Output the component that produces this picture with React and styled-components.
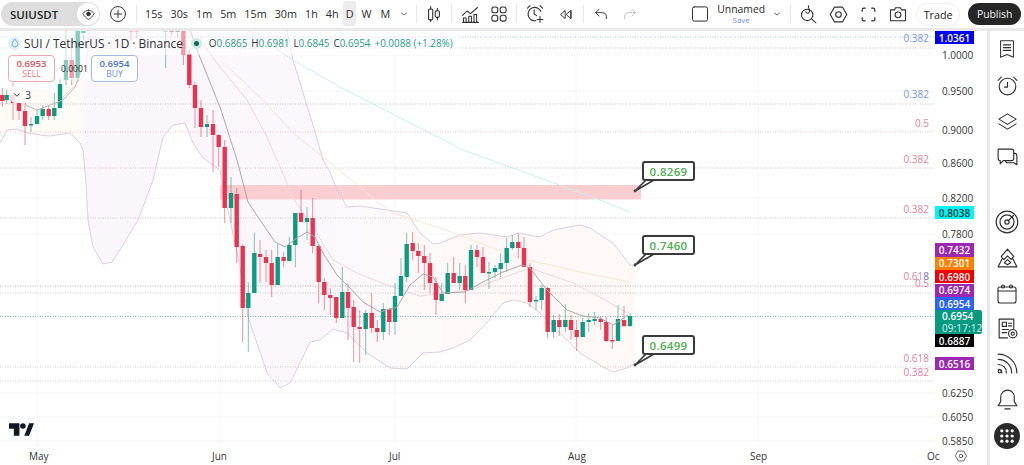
import React from "react";
import styled, { createGlobalStyle } from "styled-components";

const Global = createGlobalStyle`
  html, body { margin: 0; padding: 0; background: #fff; overflow: hidden; }
  body { font-family: "Open Sans", "Noto Sans", sans-serif; color: #131722; }
`;

const Page = styled.div`
  width: 1024px;
  height: 465px;
  display: flex;
  flex-direction: column;
  overflow: hidden;
`;

/* ---------- top toolbar ---------- */
const Toolbar = styled.div`
  height: 28px;
  flex: none;
  display: flex;
  align-items: center;
  border-bottom: 3px solid #e9e9ea;
  font-size: 11.5px;
`;
const SymbolPill = styled.div`
  width: 99px;
  height: 24px;
  flex: none;
  margin-left: 1px;
  border-radius: 12px;
  background: #dedede;
  display: flex;
  align-items: center;
  justify-content: space-between;
  padding-left: 9px;
  box-sizing: border-box;
  font-weight: 600;
  font-size: 11.5px;
  color: #222;
`;
const PillIcon = styled.div`
  width: 22px;
  height: 22px;
  margin-right: 1px;
  border-radius: 50%;
  background: #fff;
  display: flex;
  align-items: center;
  justify-content: center;
`;
const Cell = styled.div`
  width: ${(p) => p.$w}px;
  margin-left: ${(p) => p.$ml ?? 0}px;
  height: 25px;
  flex: none;
  display: flex;
  align-items: center;
  justify-content: center;
`;
const Divider = styled.div`
  width: 1px;
  height: 18px;
  flex: none;
  background: #e6e6e6;
`;
const Frames = styled.div`
  display: flex;
  align-items: center;
  margin-left: 4px;
`;
const Frame = styled.div`
  height: 25px;
  margin-top: -2px;
  padding: 0 ${(p) => p.$pad ?? 4}px;
  display: flex;
  align-items: center;
  border-radius: 3px;
  background: ${(p) => (p.$active ? "#ececec" : "transparent")};
  font-weight: 500;
  font-size: 10.8px;
  color: #2a2a2a;
`;
const LayoutName = styled.div`
  width: 50px;
  flex: none;
  margin-left: 6px;
  display: flex;
  flex-direction: column;
  align-items: center;
  line-height: 1;
  font-weight: 500;
  font-size: 10.4px;
  color: #2a2a2a;
`;
const SaveLink = styled.span`
  margin-top: 2px;
  font-size: 8px;
  color: #6d8fdc;
`;
const TradeButton = styled.div`
  width: 44px;
  height: 23px;
  flex: none;
  margin-left: 3px;
  border: 1px solid #efefef;
  border-radius: 12px;
  box-sizing: border-box;
  display: flex;
  align-items: center;
  justify-content: center;
  font-weight: 500;
  font-size: 10.8px;
  color: #222;
`;
const PublishButton = styled.div`
  width: 53px;
  height: 22px;
  flex: none;
  margin-left: 8px;
  border-radius: 11px;
  background: #262626;
  color: #f2f2f2;
  display: flex;
  align-items: center;
  justify-content: center;
  font-weight: 500;
  font-size: 10.4px;
`;

/* ---------- body ---------- */
const Body = styled.div`
  flex: 1;
  min-height: 0;
  display: flex;
`;
const ChartPane = styled.div`
  width: 987px;
  flex: none;
  display: flex;
  flex-direction: column;
`;
const ChartRow = styled.div`
  flex: 1;
  min-height: 0;
  display: flex;
`;
const Plot = styled.div`
  width: 935px;
  flex: none;
  position: relative;
  overflow: hidden;
`;
const Scale = styled.div`
  flex: 1;
  position: relative;
  overflow: hidden;
  font-size: 10px;
  font-weight: 500;
`;
const ScaleLabel = styled.div`
  position: absolute;
  left: 7px;
  top: ${(p) => p.$y - 37}px;
  line-height: 12px;
  color: #333;
`;
const PriceTag = styled.div`
  position: absolute;
  left: 0;
  top: ${(p) => p.$y - 31}px;
  width: 39px;
  height: ${(p) => p.$h ?? 13.4}px;
  background: ${(p) => p.$bg};
  color: ${(p) => p.$fg ?? "#fff"};
  display: flex;
  align-items: center;
  justify-content: center;
  font-weight: 600;
`;
const LastPrice = styled.div`
  position: absolute;
  left: 0;
  top: 279px;
  width: 47px;
  height: 24px;
  padding: 1px 0 0 7px;
  box-sizing: border-box;
  background: #089981;
  border-radius: 0 2px 2px 0;
  color: #fff;
  line-height: 11.5px;
  font-weight: 600;
`;
const Countdown = styled.div`
  font-weight: 500;
  letter-spacing: 0.1px;
  color: #d6f2ec;
`;
const TimeAxis = styled.div`
  height: 18px;
  flex: none;
  position: relative;
  font-size: 10px;
  font-weight: 500;
  color: #333;
`;
const TimeLabel = styled.span`
  position: absolute;
  left: ${(p) => p.$x}px;
  top: 3px;
  line-height: 12px;
`;
const AxisGear = styled.div`
  position: absolute;
  left: 954px;
  top: 2px;
  display: flex;
`;

/* legend over the chart */
const Legend = styled.div`
  position: absolute;
  left: 0;
  top: 0;
  height: 24px;
  padding: 4px 6px 4px 8px;
  box-sizing: border-box;
  display: flex;
  align-items: center;
  background: rgba(255, 255, 255, 0.5);
`;
const Veil = styled.div`
  position: absolute;
  left: 0;
  top: 24px;
  width: 90px;
  height: 25px;
  background: rgba(255, 255, 255, 0.5);
`;
const SymbolBadge = styled.div`
  width: 13px;
  height: 13px;
  border-radius: 50%;
  background: #e3effb;
  margin-right: 3px;
  display: flex;
  align-items: center;
  justify-content: center;
`;
const Title = styled.div`
  font-size: 11.9px;
  color: #2d2f36;
  white-space: nowrap;
`;
const StatusDot = styled.div`
  width: 5px;
  height: 5px;
  margin: 0 9.5px 0 11.5px;
  border-radius: 50%;
  background: #0b6b58;
  box-shadow: 0 0 0 3px #d4e9e4;
`;
const Ohlc = styled.div`
  display: flex;
  font-size: 9.9px;
  font-weight: 500;
  color: #1f9d87;
  white-space: nowrap;
`;
const OhlcItem = styled.span`
  margin-right: 4px;
  b { font-weight: 500; color: #333; }
`;
const Quote = styled.div`
  position: absolute;
  left: ${(p) => p.$x}px;
  top: 24px;
  width: 47px;
  height: 27px;
  box-sizing: border-box;
  border: 1px solid ${(p) => p.$line};
  border-radius: 4px;
  background: rgba(255, 255, 255, 0.92);
  display: flex;
  flex-direction: column;
  align-items: center;
  line-height: 11px;
  padding-top: 2px;
  font-size: 9.6px;
  font-weight: 600;
  color: ${(p) => p.$ink};
  span { font-weight: 400; font-size: 8.6px; opacity: 0.8; }
`;
const Spread = styled.div`
  position: absolute;
  left: 61px;
  top: 32px;
  font-size: 8.6px;
  color: #333;
`;
const Collapse = styled.div`
  position: absolute;
  left: 11px;
  top: 55px;
  width: 21px;
  height: 17px;
  display: flex;
  align-items: center;
  justify-content: center;
  gap: 3px;
  border-radius: 4px;
  background: rgba(255, 255, 255, 0.85);
  font-size: 10px;
  color: #333;
`;
const Callout = styled.div`
  position: absolute;
  left: 642px;
  top: ${(p) => p.$y - 31}px;
  width: 53px;
  height: 20px;
  box-sizing: border-box;
  border: 2px solid #3a3a3a;
  border-radius: 3px;
  background: #fff;
  display: flex;
  align-items: center;
  justify-content: center;
  font-size: 11.5px;
  font-weight: 600;
  letter-spacing: 0.3px;
  color: #4caf50;
`;
const Brand = styled.div`
  position: absolute;
  left: 9px;
  top: 392px;
  display: flex;
`;

/* ---------- right sidebar ---------- */
const Sidebar = styled.div`
  width: 34px;
  margin-left: 3px;
  box-shadow: -3px 0 0 #e9e9ea;
  display: flex;
  flex-direction: column;
  align-items: center;
`;
const SideButton = styled.div`
  height: ${(p) => p.$h ?? 36}px;
  flex: none;
  display: flex;
  align-items: center;
  justify-content: center;
  margin-top: ${(p) => p.$gap ?? 0}px;
`;
const GridButton = styled.div`
  width: 26px;
  height: 26px;
  margin-top: 6px;
  border-radius: 50%;
  background: #2a2a2a;
  display: flex;
  align-items: center;
  justify-content: center;
`;

const Ico = ({ s = 20, w = 1.4, c = "#2f2f2f", children }) => (
  <svg width={s} height={s} viewBox="0 0 24 24" fill="none" stroke={c} strokeWidth={w} strokeLinecap="round" strokeLinejoin="round">
    {children}
  </svg>
);

/* [x, bodyTop, bodyBottom, wickTop, wickBottom, up] in page pixels */
const candles = [
  [2.3,95,101,88,107,0],[6.7,95,100,90,104,1],[13,95,103,83,120,0],[19,103,111,98,120,0],[25,111,126,103,145,0],
  [31,124,125.5,117,132,1],[37,116,124,110,124,1],[42.7,109,116,105,120,1],[48.7,109,116,105,120,0],[54.3,108,116,93,120,1],
  [60,84,108,78,108,1],[66,60,80,30,85,1],[71.7,60,78,40,85,0],[77.7,30,78,30,80,1],[83.3,30,33,30,40,1],
  [131,30,31,30,40,0],[136.7,30,31,30,38,0],[165.7,30,31,30,68,1],[171.7,30,32,30,36,0],[177.7,30,32,30,38,1],[183.4,30,55,30,65,0],
  [189.3,54,85,50,88,0],[195,85,108,82,128,0],[201,108,127,100,137,0],[207,124,127,115,137,1],[213,124,135,110,172,0],[218.7,135,147,134,167,0],
  [224.7,147,208,140,223,0],[231,193,208,177,223,1],[236.7,194,247,188,263,0],[242.7,246,308,244,342,0],[248.3,293,308,282,352,1],
  [254.3,253,293,233,293,1],[260,254,257,240,283,0],[266,257,263,250,282,0],[271.7,263,285,250,297,0],[277.7,257,285,244,285,1],
  [283.7,257,261,252,267,0],[289.3,245,261,237,261,1],[295.3,213,245,213,267,1],[301,213,222,190,222,0],[307,218,222,207,240,1],
  [312.7,218,246,198,253,0],[318.7,246,282,245,303,0],[324.3,282,295,278,310,0],[330.3,295,298,288,315,0],[336.3,297,318,297,323,0],
  [342.3,292,318,267,318,1],[348,292,308,283,340,0],[353.7,307,327,300,362,0],[359.7,327,329,310,363,0],[365.7,313,329,310,355,1],
  [371.7,313,328,293,333,0],[377.3,328,332,320,342,0],[383.3,309,332,303,340,1],[389.3,309,322,308,335,0],[395,296,322,283,335,1],
  [401,276,296,258,296,1],[406.7,244,277,233,282,1],[412.7,243,251,232,260,0],[418.3,251,256,243,273,0],[424.3,256,263,245,290,0],
  [430,263,283,253,293,0],[436,283,300,277,315,0],[441.7,294,301,283,301,1],[447.7,273,294,263,294,1],[453.7,273,283,257,283,0],
  [459.7,276,283,263,290,1],[465.3,276,290,265,303,0],[471,250,290,245,290,1],[477,250,257,245,267,0],[483,257,273,247,273,0],
  [489,272,273,262,289,1],[495,268,272,265,278,1],[500.7,263,269,253,277,1],[506.7,248,263,238,272,1],[512.3,242,248,235,250,1],
  [518.3,242,248,233,258,0],[524,248,267,237,267,0],[530,267,302,263,307,0],[536,300,301,296,310,1],[541.7,288,300,285,310,1],
  [547.7,288,332,287,338,0],[553.7,320,332,315,338,1],[559.3,320,327,314,336,0],[565.3,320,327,304,332,1],[571,320,330,315,340,0],
  [576.7,330,337,320,351,0],[582.7,322,337,318,337,1],[588.7,320,322,313,332,1],[594.7,319,321,312,325,1],[600.7,319,322,317,330,0],
  [606.3,322,341,317,342,0],[612.3,340,341,325,349,0],[618,319,341,305,341,1],[624,320,326,306,327,0],[630,316,326,313,327,1],
];

const line = (pts) => pts.map((p) => p.join(",")).join(" ");

const upper = [[0,90],[30,92],[60,90],[75,62],[85,30],[287,30],[293,60],[313,125],[323,160],[330,172],[337,190],[347,207],[360,206],[387,210],[407,213],[420,233],[433,244],[440,243],[460,235],[480,233],[507,237],[518,233],[540,237],[553,230],[580,225],[590,228],[613,243],[630,265],[635,266]];
const lower = [[0,143],[7,130],[17,129],[28,133],[40,135],[50,136],[70,133],[80,143],[83,150],[86,183],[88,220],[93,247],[103,264],[112,262],[123,245],[138,220],[153,180],[163,137],[173,125],[185,123],[193,143],[203,158],[220,170],[223,187],[240,267],[248,317],[267,373],[280,388],[290,383],[300,363],[310,342],[320,340],[333,329],[347,333],[367,353],[390,368],[407,369],[423,353],[440,352],[453,348],[470,340],[483,327],[503,303],[513,300],[527,303],[540,313],[567,340],[580,353],[603,367],[613,372],[627,368],[635,363]];
const maDark = [[190,30],[197,50],[220,107],[237,160],[248,202],[260,220],[275,242],[285,247],[297,238],[307,232],[315,237],[323,253],[337,275],[350,288],[363,302],[380,312],[397,307],[410,285],[423,274],[433,277],[443,293],[465,292],[483,282],[503,272],[522,265],[530,268],[547,290],[567,310],[583,316],[600,318],[613,325],[628,315]];
const maLeft = [[25,105],[37,110],[63,100],[75,87],[82,70]];
const curveLeft = [[62,98],[72,88],[84,76],[88,50],[89,30]];
const basis = [[200,40],[217,63],[247,100],[267,137],[277,160],[293,198],[313,227],[333,260],[357,273],[387,285],[420,296],[470,290],[510,275],[530,268],[573,283],[600,297],[617,307],[628,313]];
const maOrange = [[220,60],[260,97],[293,133],[327,160],[390,212],[440,228],[520,258],[580,272],[630,282]];
const maTeal = [[247,30],[293,60],[340,87],[420,128],[463,150],[540,178],[600,200],[630,212]];

const dotted = [
  [37,"#a9b8dc"],[48,"#c4c4c4"],[104,"#c4c4c4"],[132,"#e6c2cf"],[168,"#d5c6cc"],[218,"#d0c8cc"],
  [286,"#b5b5b5"],[293,"#c9c9c9"],[316.5,"#6fb8a8"],[367,"#c9c9c9"],[381,"#d8c8d0"],
];
const fibs = [
  [42,"0.382","#7a96d6"],[98,"0.382","#7a96d6"],[127,"0.5","#e27fa3"],[163,"0.382","#e27fa3"],
  [213,"0.382","#e27fa3"],[280,"0.618","#e27fa3"],[287,"0.5","#e27fa3"],[362,"0.618","#e27fa3"],[376,"0.382","#e27fa3"],
];

const Chart = () => (
  <svg width="935" height="416" viewBox="0 31 935 416" style={{ display: "block" }}>
    <defs>
      <linearGradient id="band" x1="0" x2="1" y1="0" y2="0">
        <stop offset="0" stopColor="#fffcf8" />
        <stop offset="0.12" stopColor="#fffcf8" />
        <stop offset="0.135" stopColor="#fbf6fc" />
        <stop offset="0.5" stopColor="#fcf7fb" />
        <stop offset="0.7" stopColor="#fef9f8" />
        <stop offset="1" stopColor="#fef8f7" />
      </linearGradient>
    </defs>
    {[55,91,130,163,198,234,393,417,441].map((y) => (
      <line key={y} x1="0" x2="935" y1={y} y2={y} stroke="#f5f6f8" />
    ))}
    {[37,220,395,576,758].map((x) => (
      <line key={x} x1={x} x2={x} y1="31" y2="447" stroke="#f5f6f8" />
    ))}
    <polygon points={line([...upper, ...[...lower].reverse()])} fill="url(#band)" />
    {dotted.map(([y, c]) => (
      <line key={y} x1="0" x2="935" y1={y} y2={y} stroke={c} strokeDasharray="1 1.5" />
    ))}
    <rect x="220" y="185" width="421" height="14.5" fill="#f9c9cb" opacity="0.9" />
    <polyline points={line(upper.slice(4))} fill="none" stroke="#dccfe0" />
    <polyline points={line(lower)} fill="none" stroke="#dccfe0" />
    <polyline points={line(curveLeft)} fill="none" stroke="#f3d8cf" />
    <polyline points={line(maTeal)} fill="none" stroke="#c9f1ec" />
    <polyline points={line(maOrange)} fill="none" stroke="#f7e6d6" />
    <polyline points={line(basis)} fill="none" stroke="#eed6e0" />
    {candles.map(([x, t, b, wt, wb, up]) => {
      const col = up ? "#0c9a80" : "#e8344f";
      return (
        <g key={x}>
          <line x1={x} x2={x} y1={wt} y2={wb} stroke={col} strokeOpacity="0.55" />
          <rect x={x - 2.2} y={t} width="4.4" height={Math.max(b - t, 1.5)} fill={col} />
        </g>
      );
    })}
    <polyline points={line(maDark)} fill="none" stroke="#b0a5ab" />
    <polyline points={line(maLeft)} fill="none" stroke="#bdb3b5" />
    {[[191,647],[265,647],[365,647]].map(([y, x]) => (
      <g key={y}>
        <path d={`M${x} ${y - 12}L${x - 12} ${y}L${x + 7} ${y - 11}`} fill="#fff" stroke="#3a3a3a" strokeWidth="1.6" strokeLinejoin="round" />
        <circle cx={x - 12} cy={y} r="1.4" fill="#444" />
      </g>
    ))}
    {fibs.map(([y, t, c]) => (
      <text key={y} x="929" y={y} textAnchor="end" fontSize="10" fill={c} fontFamily="Open Sans, sans-serif">{t}</text>
    ))}
    <text x="929" y="280" textAnchor="end" fontSize="10" fill="#7a96d6" fontFamily="Open Sans, sans-serif">8</text>
  </svg>
);

const frames = [["15s"],["30s"],["1m"],["5m"],["15m"],["30m"],["1h"],["4h"],["D",3],["W",5],["M",4]];
const scaleLabels = [["1.0000",55],["0.9500",91],["0.9000",130],["0.8600",163],["0.8200",198],["0.7800",234],["0.6250",393],["0.6050",417],["0.5850",441]];
const tags = [
  ["1.0361",31,"#0000f0"],["0.8038",206,"#00f6f6","#1b3b3b"],["0.7432",243.3,"#9c27b0"],["0.7301",256.7,"#ff8000"],
  ["0.6980",270,"#f20000"],["0.6974",283.5,"#9c27b0"],["0.6954",297,"#2962ff"],["0.6887",334,"#000"],["0.6516",357,"#9c27b0"],
];

export default function App() {
  return (
    <Page>
      <Global />
      <Toolbar>
        <SymbolPill>
          SUIUSDT
          <PillIcon>
            <Ico s={15}><path d="M12 5c3 0 7 2.500 9 5.500-2 4-6 8-9 9.500-3-1.500-7-5.500-9-9.500 2-3 6-5.500 9-5.500z" /><circle cx="12" cy="11" r="3" fill="#2f2f2f" /></Ico>
          </PillIcon>
        </SymbolPill>
        <Cell $w={36}>
          <Ico s={18} w={1.3}><circle cx="12" cy="12" r="10" /><path d="M12 7v10M7 12h10" /></Ico>
        </Cell>
        <Divider />
        <Frames>
          {frames.map(([f, pad]) => <Frame key={f} $active={f === "D"} $pad={pad}>{f}</Frame>)}
          <Cell $w={20}><Ico s={12}><path d="M7 10l5 4 5-4" /></Ico></Cell>
        </Frames>
        <Cell $w={2} />
        <Divider />
        <Cell $w={34}>
          <Ico s={20} w={1.3}><path d="M8 3v3M8 19v2M16 5v3M16 16v3" /><rect x="5.500" y="6" width="5" height="13" rx="1.500" /><rect x="13.500" y="8" width="5" height="8" rx="1.500" /></Ico>
        </Cell>
        <Divider />
        <Cell $w={36}>
          <Ico s={21} w={1.2}><path d="M3 13l5-5 4 3 8-7" /><path d="M4 21v-5h3v5M10 21v-7h3v7M16 21v-9h3v9M3 21h18" /></Ico>
        </Cell>
        <Cell $w={22}>
          <Ico s={20} w={1.3}><rect x="3.500" y="3.500" width="7" height="7" rx="2.500" /><rect x="13.500" y="3.500" width="7" height="7" rx="2.500" /><rect x="3.500" y="13.500" width="7" height="7" rx="2.500" /><rect x="13.500" y="13.500" width="7" height="7" rx="2.500" /></Ico>
        </Cell>
        <Cell $w={6} />
        <Divider />
        <Cell $w={36}>
          <Ico s={20} w={1.3}><path d="M19 9a8 8 0 1 0-6 11" /><path d="M11 7v5l3 2M3 5l3-3M18 2l3 3M18 15v7M14.500 18.500h7" /></Ico>
        </Cell>
        <Cell $w={24}>
          <Ico s={15} w={1.5}><path d="M11 6l-7 6 7 6zM20 6l-7 6 7 6zM21 6v12" /></Ico>
        </Cell>
        <Cell $w={6} />
        <Divider />
        <Cell $w={34}>
          <Ico s={16} w={1.4}><path d="M9 5L4 10l5 5" /><path d="M4 10h10a6 6 0 0 1 6 6v3" /></Ico>
        </Cell>
        <Cell $w={24}>
          <Ico s={16} w={1.4} c="#bdbdbd"><path d="M15 5l5 5-5 5" /><path d="M20 10H10a6 6 0 0 0-6 6v3" /></Ico>
        </Cell>
        <Cell $w={20} $ml={48}>
          <Ico s={20} w={1.2}><rect x="3" y="3.500" width="18" height="17" rx="2" /></Ico>
        </Cell>
        <LayoutName>
          Unnamed
          <SaveLink>Save</SaveLink>
        </LayoutName>
        <Cell $w={22}><Ico s={12}><path d="M7 10l5 4 5-4" /></Ico></Cell>
        <Cell $w={2} />
        <Divider />
        <Cell $w={30} $ml={2}>
          <Ico s={21} w={1.2}><circle cx="10.500" cy="12.500" r="6.500" /><path d="M15.500 17l5 4.500M12 2c-1 3 2 4 1 7-.5 2-3 2-4 0" /></Ico>
        </Cell>
        <Cell $w={30}>
          <Ico s={21} w={1.3}><path d="M7.500 3.500h9l5 8.500-5 8.500h-9l-5-8.500z" /><circle cx="12" cy="12" r="3.200" /></Ico>
        </Cell>
        <Cell $w={30}>
          <Ico s={19} w={1.5}><path d="M4 8V6a2 2 0 0 1 2-2h2M16 4h2a2 2 0 0 1 2 2v2M20 16v2a2 2 0 0 1-2 2h-2M8 20H6a2 2 0 0 1-2-2v-2" /></Ico>
        </Cell>
        <Cell $w={30}>
          <Ico s={20} w={1.3}><path d="M3 7h5l1-2.500h6L16 7h5v13H3z" /><circle cx="12" cy="13" r="3.500" /></Ico>
        </Cell>
        <TradeButton>Trade</TradeButton>
        <PublishButton>Publish</PublishButton>
      </Toolbar>
      <Body>
        <ChartPane>
          <ChartRow>
            <Plot>
              <Chart />
              <Legend>
                <SymbolBadge>
                  <Ico s={10} c="#5b9bd5" w={2}><path d="M12 3l6 8a7 7 0 1 1-12 0z" /></Ico>
                </SymbolBadge>
                <Title>SUI / TetherUS · 1D · Binance</Title>
                <StatusDot />
                <Ohlc>
                  <OhlcItem><b>O</b>0.6865</OhlcItem>
                  <OhlcItem><b>H</b>0.6981</OhlcItem>
                  <OhlcItem><b>L</b>0.6845</OhlcItem>
                  <OhlcItem><b>C</b>0.6954</OhlcItem>
                  <OhlcItem>+0.0088 (+1.28%)</OhlcItem>
                </Ohlc>
              </Legend>
              <Veil />
              <Quote $x={8} $line="#e9aab2" $ink="#e2505f">0.6953<span>SELL</span></Quote>
              <Spread>0.0001</Spread>
              <Quote $x={91} $line="#a8b9de" $ink="#4a6fd0">0.6954<span>BUY</span></Quote>
              <Collapse>
                <Ico s={10} w={2.4}><path d="M6 9l6 6 6-6" /></Ico>3
              </Collapse>
              <Callout $y={161}>0.8269</Callout>
              <Callout $y={235}>0.7460</Callout>
              <Callout $y={335}>0.6499</Callout>
              <Brand>
                <svg width="25" height="13" viewBox="0 0 36 18" fill="#131722">
                  <path d="M0 0h15v18H7V8H0zM22 18l7-18h7l-7 18z" />
                  <circle cx="20" cy="4" r="4" />
                </svg>
              </Brand>
            </Plot>
            <Scale>
              {scaleLabels.map(([t, y]) => <ScaleLabel key={t} $y={y}>{t}</ScaleLabel>)}
              {tags.map(([t, y, bg, fg]) => <PriceTag key={t + y} $y={y} $bg={bg} $fg={fg}>{t}</PriceTag>)}
              <LastPrice>
                0.6954
                <Countdown>09:17:12</Countdown>
              </LastPrice>
            </Scale>
          </ChartRow>
          <TimeAxis>
            <TimeLabel $x={29}>May</TimeLabel>
            <TimeLabel $x={212}>Jun</TimeLabel>
            <TimeLabel $x={389}>Jul</TimeLabel>
            <TimeLabel $x={568}>Aug</TimeLabel>
            <TimeLabel $x={750}>Sep</TimeLabel>
            <TimeLabel $x={927}>Oc</TimeLabel>
            <AxisGear>
              <Ico s={14} w={1.5} c="#555"><path d="M7.500 3.500h9l5 8.500-5 8.500h-9l-5-8.500z" /><circle cx="12" cy="12" r="3" /></Ico>
            </AxisGear>
          </TimeAxis>
        </ChartPane>
        <Sidebar>
          <SideButton>
            <Ico s={22} w={1.1}><path d="M5 3h14v18l-7-3-7 3z" /><path d="M8 7.500h8M8 10.500h8M8 13.500h8" /></Ico>
          </SideButton>
          <SideButton>
            <Ico s={25} w={1.1}><circle cx="12" cy="13" r="8" /><path d="M12 9v4.500H9M3 7l3-3M21 7l-3-3" /></Ico>
          </SideButton>
          <SideButton>
            <Ico s={23} w={1.1}><path d="M12 4l9 5.500-9 5.500-9-5.500z" /><path d="M3 14.500l9 5.500 9-5.500" /></Ico>
          </SideButton>
          <SideButton>
            <Ico s={25} w={1.1}><path d="M3 4h13a2 2 0 0 1 2 2v7a2 2 0 0 1-2 2H8l-3 3v-3H5a2 2 0 0 1-2-2z" /><path d="M18 8h1a2 2 0 0 1 2 2v9l-3-2h-7l-1-2" /></Ico>
          </SideButton>
          <SideButton $gap={29}>
            <Ico s={26} w={1.1}><circle cx="12" cy="12" r="10" /><circle cx="12" cy="12" r="6.500" /><circle cx="12" cy="12" r="2" /><path d="M13 11l5-5" /></Ico>
          </SideButton>
          <SideButton>
            <Ico s={25} w={1.1}><path d="M12 3l6 7-2.500 3L12 9.500 8.500 13 6 10z" /><path d="M7 12l-4 8h18l-4-8M12 13l-3 3 3 2 3-2z" /></Ico>
          </SideButton>
          <SideButton $h={35}>
            <Ico s={24} w={1.1}><rect x="3" y="5" width="18" height="16" rx="2" /><path d="M3 9h18" /><circle cx="8" cy="4.500" r="1.500" /><circle cx="16" cy="4.500" r="1.500" /></Ico>
          </SideButton>
          <SideButton $h={35}>
            <Ico s={25} w={1.1}><path d="M18 12V3H4v18h8" /><rect x="7" y="6" width="4" height="4" /><path d="M13 7h3M13 9.500h3M7 13h6M7 16h4" /><circle cx="17" cy="17" r="4" /><circle cx="17" cy="17" r="1.500" /></Ico>
          </SideButton>
          <SideButton $h={35}>
            <Ico s={25} w={1.1}><path d="M3 3c10 0 18 8 18 18M3 8c7.500 0 13 6 13 13M3 13c5 0 8 3.500 8 8" /><circle cx="4.500" cy="19.500" r="1.500" /><path d="M3 17.500c2 0 3.500 1.500 3.500 3.500" /></Ico>
          </SideButton>
          <SideButton $h={36}>
            <Ico s={25} w={1.1}><path d="M12 3a6.500 6.500 0 0 0-6.500 6.500V14L3 18h18l-2.500-4V9.500A6.500 6.500 0 0 0 12 3z" /><path d="M9.500 21h5" /></Ico>
          </SideButton>
          <GridButton>
            <svg width="14" height="14" viewBox="0 0 14 14" fill="#fff">
              {[1.8,7,12.2].flatMap((y) => [1.8,7,12.2].map((x) => <circle key={`${x}-${y}`} cx={x} cy={y} r="1.600" />))}
            </svg>
          </GridButton>
        </Sidebar>
      </Body>
    </Page>
  );
}
